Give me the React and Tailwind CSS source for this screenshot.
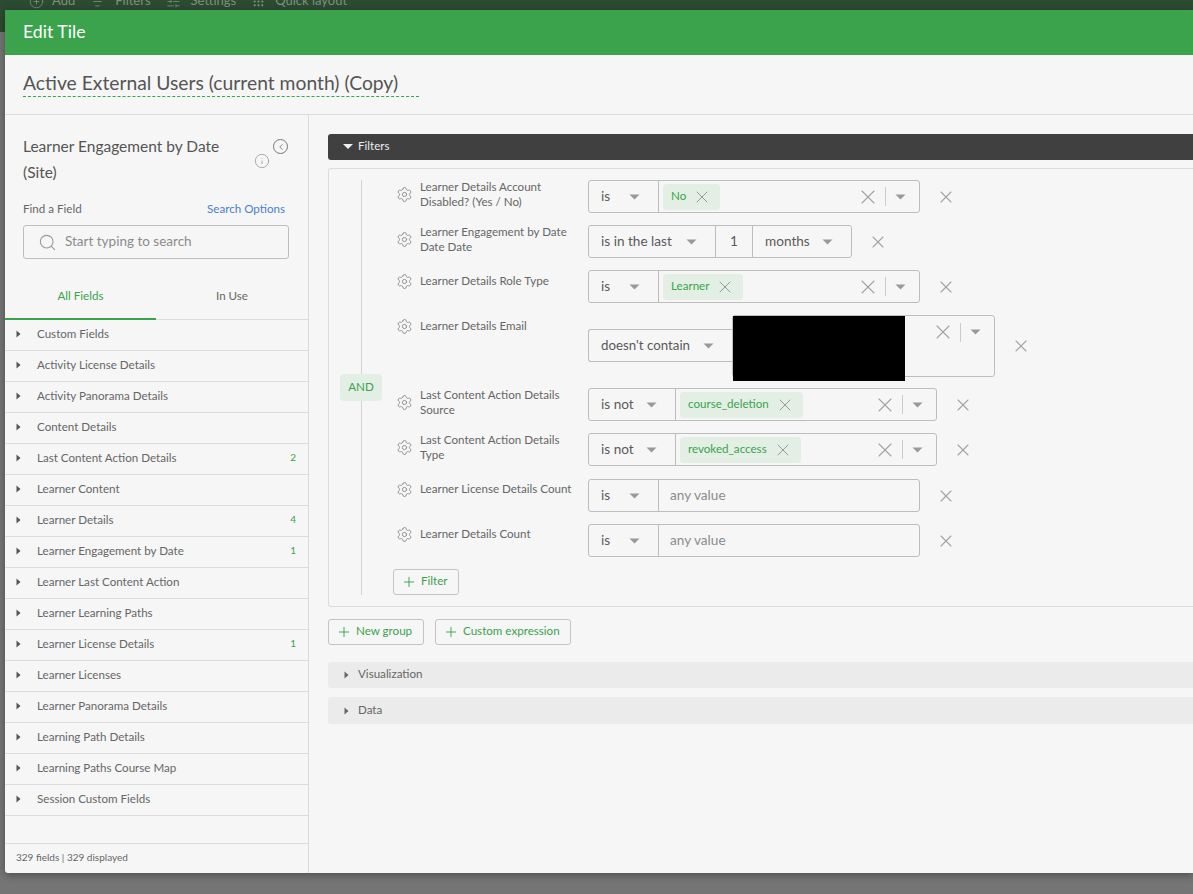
import { ChevronLeft, CirclePlus, Grip, Info, ListFilter, Plus, Search, Settings, SlidersHorizontal, X } from "lucide-react";

const fields = [
  ["Custom Fields"],
  ["Activity License Details"],
  ["Activity Panorama Details"],
  ["Content Details"],
  ["Last Content Action Details", 2],
  ["Learner Content"],
  ["Learner Details", 4],
  ["Learner Engagement by Date", 1],
  ["Learner Last Content Action"],
  ["Learner Learning Paths"],
  ["Learner License Details", 1],
  ["Learner Licenses"],
  ["Learner Panorama Details"],
  ["Learning Path Details"],
  ["Learning Paths Course Map"],
  ["Session Custom Fields"],
];

const Down = ({ className = "" }) => (
  <svg width="11" height="6" viewBox="0 0 11 6" className={`shrink-0 ${className}`}>
    <path d="M0.5 0.5h10L5.5 5.5z" fill="#999" />
  </svg>
);

const Right = ({ color = "#555" }) => (
  <svg width="5" height="8" viewBox="0 0 5 8" className="shrink-0">
    <path d="M0.5 0.5v7L4.5 4z" fill={color} />
  </svg>
);

const Clear = () => <X size={24} strokeWidth={1.1} className="text-[#a3a3a3] shrink-0" />;

const Remove = () => (
  <div className="ml-[16px] h-[33px] flex items-center">
    <X size={20} strokeWidth={1.3} className="text-[#a3a3a3]" />
  </div>
);

const Op = ({ w, children, size = "text-[13.6px]", pad = "pb-px" }) => (
  <div className={`${w} h-full flex items-center justify-between pl-3 pr-[18px] ${size} text-[#5a5a5a] shrink-0`}>
    <span className={pad}>{children}</span>
    <Down />
  </div>
);

const Chip = ({ children }) => (
  <div className="ml-1 h-[26px] pl-2 pr-[8px] flex items-center gap-[6px] rounded bg-[#e3efe5] text-[11.6px] text-[#3aa34b]">
    <span className="pb-px">{children}</span>
    <X size={20} strokeWidth={1.2} className="text-[#999]" />
  </div>
);

const Label = ({ children, pad = "" }) => (
  <div className={`w-[195px] shrink-0 flex gap-[7px] items-center self-start ${pad}`}>
    <Settings size={17} strokeWidth={1.3} className="ml-[3px] text-[#8a8a8a] shrink-0" />
    <div className={`${pad ? "-mt-[3px]" : "-mt-px"} text-[11.6px] leading-[15px] text-[#666] w-[160px]`}>{children}</div>
  </div>
);

const ValueTail = () => (
  <div className="ml-auto flex items-center">
    <Clear />
    <div className="w-px h-[19px] bg-[#ccc] ml-[5px] mr-[9px]" />
    <Down className="mr-[13px]" />
  </div>
);

const SelectRow = ({ label, op, w, chip, total, pad }) => (
  <div className="h-[33px] flex items-start">
    <Label pad={pad}>{label}</Label>
    <div className={`${total} h-[33px] flex items-center border border-[#bdbdbd] rounded-[3px] shrink-0`}>
      <Op w={w}>{op}</Op>
      <div className="flex-1 h-full border-l border-[#bdbdbd] flex items-center">
        <Chip>{chip}</Chip>
        <ValueTail />
      </div>
    </div>
    <Remove />
  </div>
);

const AnyRow = ({ label, className = "" }) => (
  <div className={`h-[33px] flex items-start ${className}`}>
    <Label pad="pt-[2px]">{label}</Label>
    <div className="w-[332px] h-[33px] flex items-center border border-[#bdbdbd] rounded-[3px] shrink-0">
      <Op w="w-[69px]">is</Op>
      <div className="flex-1 h-full border-l border-[#bdbdbd] flex items-center pl-[11px] pb-px text-[13.6px] text-[#8c8c8c]">
        any value
      </div>
    </div>
    <Remove />
  </div>
);

const GreenButton = ({ children, className = "" }) => (
  <button className={`h-[26px] pl-[7px] flex items-center gap-[4px] border border-[#c4c4c4] rounded-[3px] text-[11.6px] text-[#3aa34b] ${className}`}>
    <Plus size={16} strokeWidth={1.4} />
    <span className="pb-[2px]">{children}</span>
  </button>
);

const Section = ({ children, className = "" }) => (
  <div className={`pl-[16px] flex items-center gap-[9px] bg-[#ebebeb] rounded-l-[3px] text-[11.6px] text-[#666] ${className}`}>
    <Right color="#666" />
    <span className="pb-[2px]">{children}</span>
  </div>
);

export default function App() {
  return (
    <div className="relative h-[894px] bg-[#757575] overflow-hidden" style={{ fontFamily: "Lato, 'Noto Sans', sans-serif" }}>
      <div className="h-[32px] bg-[#2d4a33] overflow-hidden">
        <div className="-mt-[9px] pl-[29px] h-[20px] flex items-center text-[13px] text-[#7f917f]">
          <CirclePlus size={15} strokeWidth={1.3} />
          <span className="ml-[8px]">Add</span>
          <ListFilter size={15} strokeWidth={1.3} className="ml-[15px]" />
          <span className="ml-[10px]">Filters</span>
          <SlidersHorizontal size={15} strokeWidth={1.3} className="ml-[15px]" />
          <span className="ml-[10px]">Settings</span>
          <Grip size={13} strokeWidth={2} className="ml-[16px]" />
          <span className="ml-[10px]">Quick layout</span>
        </div>
      </div>

      <div className="absolute left-[5px] top-[10px] w-[1188px] h-[863px] flex flex-col bg-[#f6f6f6] rounded-bl-[3px] overflow-hidden shadow-[0_2px_8px_rgba(0,0,0,0.35)]">
        <div className="h-[45px] shrink-0 bg-[#3aa34b] pl-[18px] flex items-center text-[17.7px] text-white">Edit Tile</div>

        <div className="h-[60px] shrink-0 pl-[18px] pt-[13px] border-b border-[#dcdcdc]">
          <div className="w-[396px] h-[29px] border-b border-dashed border-[#3aa34b] text-[19.3px] leading-[29px] text-[#555]">
            Active External Users (current month) (Copy)
          </div>
        </div>

        <div className="flex-1 flex min-h-0">
          <aside className="w-[304px] shrink-0 border-r border-[#dcdcdc] flex flex-col">
            <div className="pl-[18px] pr-[19px] pt-[18px] flex">
              <div className="w-[209px] text-[15.5px] leading-[26px] text-[#555]">Learner Engagement by Date (Site)</div>
              <div className="flex-1 relative">
                <Info size={16} strokeWidth={1.2} className="absolute left-[22px] top-[20px] text-[#999]" />
                <div className="absolute left-[41px] top-[6px] w-[15px] h-[15px] rounded-full border border-[#777] flex items-center justify-center">
                  <ChevronLeft size={10} strokeWidth={1.8} className="text-[#666]" />
                </div>
              </div>
            </div>
            <div className="mt-[16px] pl-[18px] pr-[23px] flex justify-between text-[11.6px] leading-[16px]">
              <span className="text-[#666]">Find a Field</span>
              <span className="text-[#4a7fd0]">Search Options</span>
            </div>
            <div className="mt-[8px] ml-[18px] w-[266px] h-[34px] shrink-0 border border-[#bdbdbd] rounded-[3px] flex items-center pl-[14px] gap-[8px] pb-[2px] text-[13.5px] text-[#8c8c8c]">
              <Search size={19} strokeWidth={1.4} className="text-[#999] mt-[2px]" />
              Start typing to search
            </div>
            <div className="mt-[17px] h-[44px] shrink-0 flex border-b border-[#dcdcdc] text-[11.6px]">
              <div className="w-[151px] h-[44px] flex items-center justify-center border-b-2 border-[#3aa34b] text-[#3aa34b] pb-[3px]">All Fields</div>
              <div className="flex-1 flex items-center justify-center text-[#666] pb-[3px]">In Use</div>
            </div>
            <div className="flex-1">
              {fields.map(([name, count]) => (
                <div key={name} className="h-[31px] flex items-center pl-[11px] pr-[12px] pb-[3px] border-b border-[#dcdcdc] text-[11.6px] text-[#666]">
                  <Right />
                  <span className="ml-[16px]">{name}</span>
                  {count && <span className="ml-auto text-[10px] text-[#3aa34b]">{count}</span>}
                </div>
              ))}
            </div>
            <div className="h-[30px] shrink-0 border-t border-[#dcdcdc] pl-[11px] pb-[3px] flex items-center text-[10px] text-[#666]">
              329 fields | 329 displayed
            </div>
          </aside>

          <main className="flex-1 pl-[19px] pt-[19px] min-w-0">
            <div className="h-[26px] pl-[15px] pb-[2px] flex items-center gap-[5px] bg-[#404040] rounded-l-[3px] text-[11.6px] text-[#ececec]">
              <svg width="10" height="5" viewBox="0 0 10 5"><path d="M0 0h10L5 5z" fill="#eee" /></svg>
              Filters
            </div>

            <div className="relative mt-[8px] h-[439px] border border-r-0 border-[#dcdcdc] rounded-l-[3px] pl-[64px] pt-[11px]">
              <div className="absolute left-[32px] top-[11px] h-[415px] w-px bg-[#d4d4d4]" />
              <div className="absolute left-[11px] top-[205px] w-[42px] h-[27px] pb-[2px] rounded bg-[#e3efe5] flex items-center justify-center text-[11.6px] text-[#3aa34b]">AND</div>

              <div className="flex flex-col gap-[12px] items-start">
                <SelectRow label="Learner Details Account Disabled? (Yes / No)" op="is" w="w-[69px]" total="w-[332px]" chip="No" />

                <div className="h-[33px] flex items-start">
                  <Label>Learner Engagement by Date Date Date</Label>
                  <div className="w-[264px] h-[33px] flex items-center border border-[#bdbdbd] rounded-[3px] shrink-0">
                    <Op w="w-[126px]">is in the last</Op>
                    <div className="w-[38px] h-full pb-px border-x border-[#bdbdbd] flex items-center justify-center text-[13.6px] text-[#5a5a5a] shrink-0">1</div>
                    <Op w="flex-1">months</Op>
                  </div>
                  <Remove />
                </div>

                <SelectRow label="Learner Details Role Type" op="is" w="w-[69px]" total="w-[332px]" chip="Learner" pad="pt-[3px]" />

                <div className="h-[61px] flex items-start">
                  <Label pad="pt-[3px]">Learner Details Email</Label>
                  <div className="h-[33px] w-[144px] mt-[14px] flex items-center border border-r-0 border-[#bdbdbd] rounded-l-[3px] shrink-0">
                    <Op w="w-full" size="text-[13.3px]" pad="">doesn't contain</Op>
                  </div>
                  <div className="relative w-[263px] h-[62px] border border-[#bdbdbd] rounded-[3px] shrink-0 pt-[4px]">
                    <div className="absolute left-0 top-0 w-[172px] h-[65px] bg-black" />
                    <div className="flex items-center"><ValueTail /></div>
                  </div>
                  <div className="mt-[14px]"><Remove /></div>
                </div>

                <SelectRow label="Last Content Action Details Source" op="is not" w="w-[86px]" total="w-[349px]" chip="course_deletion" />
                <SelectRow label="Last Content Action Details Type" op="is not" w="w-[86px]" total="w-[349px]" chip="revoked_access" />
                <AnyRow label="Learner License Details Count" className="mt-px" />
                <AnyRow label="Learner Details Count" />
                <GreenButton className="w-[66px]">Filter</GreenButton>
              </div>
            </div>

            <div className="mt-[12px] flex gap-[11px]">
              <GreenButton className="w-[96px]">New group</GreenButton>
              <GreenButton className="w-[136px]">Custom expression</GreenButton>
            </div>

            <Section className="mt-[17px] h-[26px]">Visualization</Section>
            <Section className="mt-[9px] h-[27px]">Data</Section>
          </main>
        </div>
      </div>
    </div>
  );
}
